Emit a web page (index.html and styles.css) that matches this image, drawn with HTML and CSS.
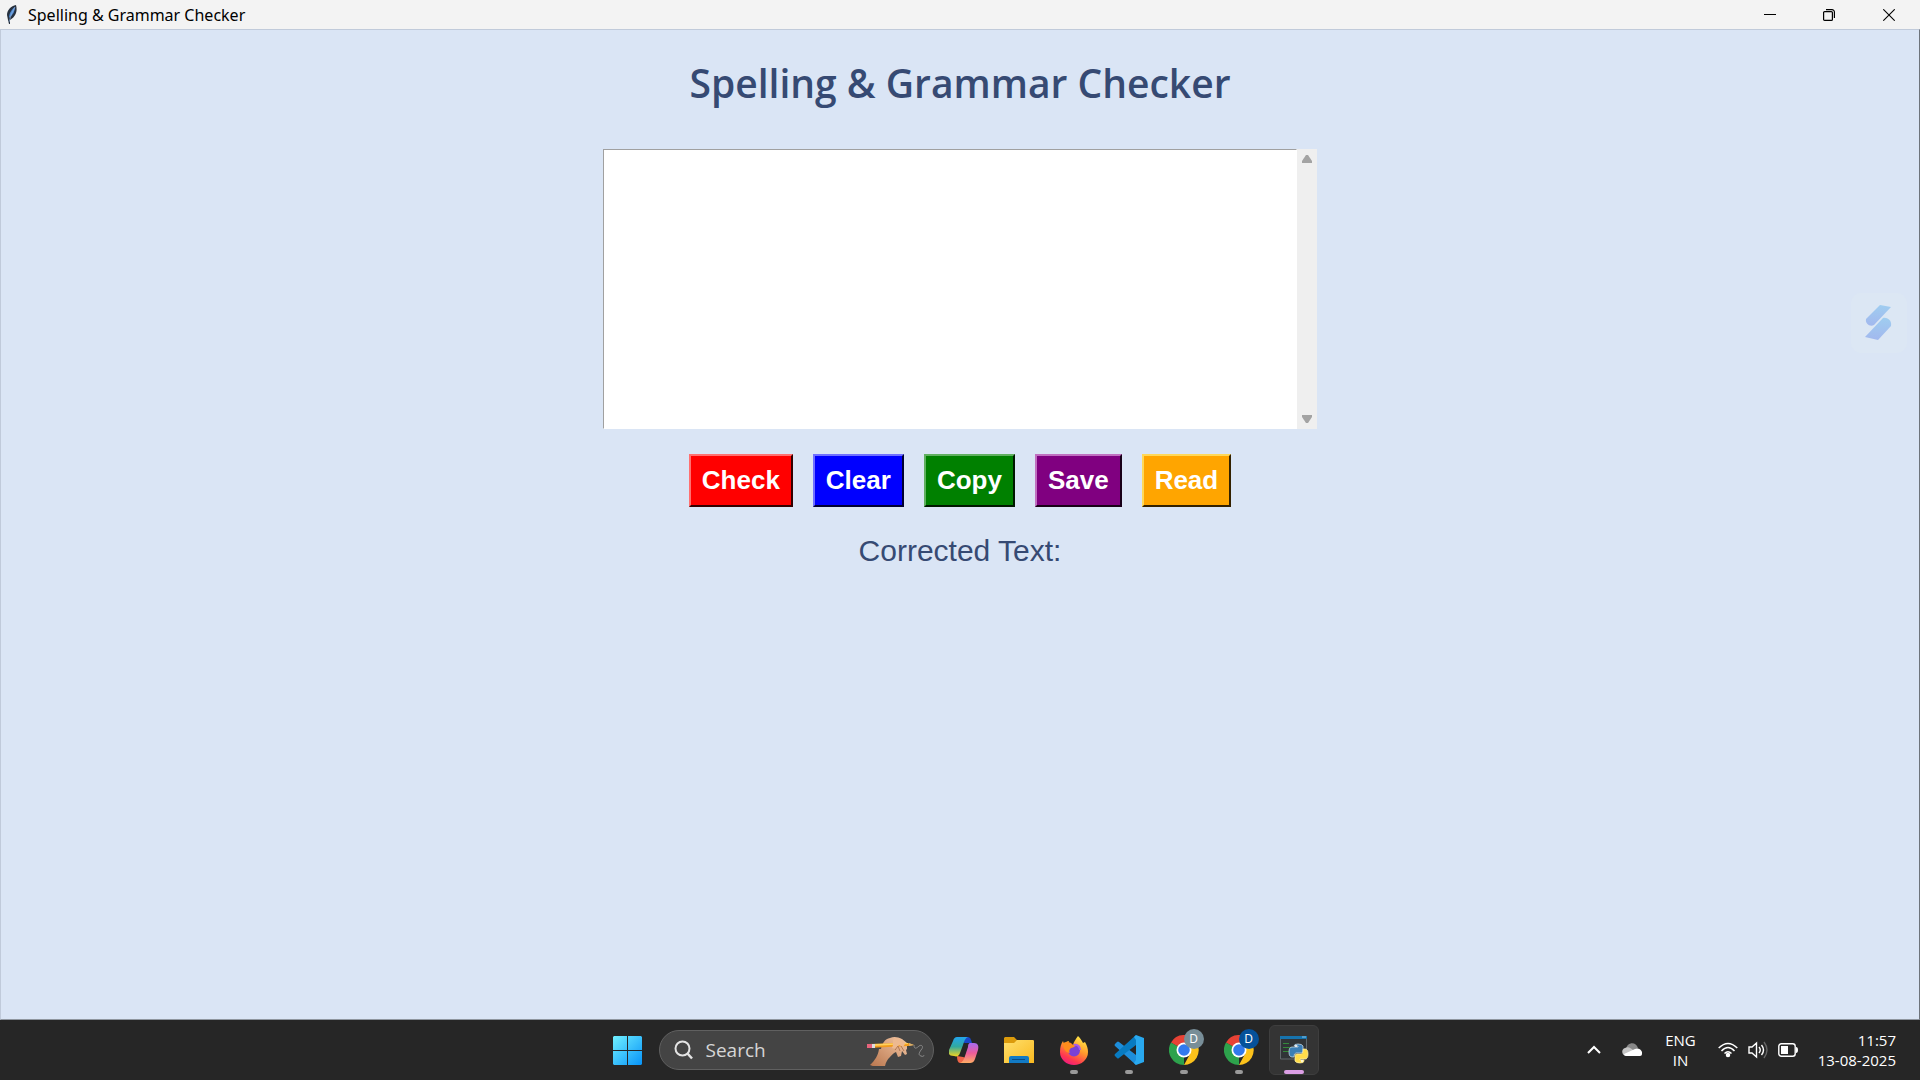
FILE: index.html
```html
<!DOCTYPE html>
<html lang="en">
<head>
<meta charset="utf-8">
<title>Spelling &amp; Grammar Checker</title>
<link rel="stylesheet" href="styles.css">
</head>
<body>
<header class="titlebar">
  <svg class="feather" width="12" height="20" viewBox="0 0 12 20"><path d="M10 0C5 1 1 5 1 10l1 5 1 4 1 0 0-4C9 12 12 7 10 0z" fill="#27313f"/><path d="M9 2C6 4 3 8 3 13 7 10 9 6 9 2z" fill="#4f8ad2"/><path d="M9 2Q5 8 3 17" stroke="#9fbfe6" stroke-width=".6" fill="none"/></svg>
  <span class="titlebar-text">Spelling &amp; Grammar Checker</span>
  <div class="window-controls">
    <button class="window-button" aria-label="Minimize"><svg width="12" height="12" viewBox="0 0 12 12"><path d="M0 5.5h12" stroke="#000"/></svg></button>
    <button class="window-button" aria-label="Restore"><svg width="12" height="12" viewBox="0 0 12 12" fill="none" stroke="#000" stroke-width="1.2"><rect x=".6" y="2.6" width="8.8" height="8.8" rx="1"/><path d="M3 .6h6a2.4 2.4 0 0 1 2.4 2.4v6"/></svg></button>
    <button class="window-button" aria-label="Close"><svg width="12" height="12" viewBox="0 0 12 12"><path d="M.3.3l11.4 11.4M11.7.3L.3 11.7" stroke="#000" stroke-width="1.1"/></svg></button>
  </div>
</header>

<main class="app">
  <h1 class="heading">Spelling &amp; Grammar Checker</h1>
  <div class="editor">
    <textarea class="editor-input" aria-label="Text to check"></textarea>
    <div class="scrollbar">
      <button class="scroll-button" aria-label="Scroll up"><svg width="12" height="8" viewBox="0 0 12 8"><path d="M5 0h2l4 6v2H1V6z" fill="#a3a3a3"/></svg></button>
      <button class="scroll-button" aria-label="Scroll down"><svg width="12" height="8" viewBox="0 0 12 8"><path d="M5 8h2l4-6V0H1v2z" fill="#a3a3a3"/></svg></button>
    </div>
  </div>
  <div class="actions">
    <button class="action check">Check</button>
    <button class="action clear">Clear</button>
    <button class="action copy">Copy</button>
    <button class="action save">Save</button>
    <button class="action read">Read</button>
  </div>
  <p class="result">Corrected Text:</p>
  <button class="assistant" aria-label="Assistant">
    <svg width="28" height="36" viewBox="0 0 28 36"><defs><linearGradient id="bolt" x1="0" y1="0" x2="0" y2="1"><stop offset="0" stop-color="#9fcdf0"/><stop offset="1" stop-color="#a2b8ee"/></linearGradient></defs><path d="M15 0l11 2L9 20C5 22 0 19 1 14z" fill="url(#bolt)"/><path d="M18 13c5-1 9 3 8 8L13 35 0 32z" fill="url(#bolt)"/></svg>
  </button>
</main>

<footer class="taskbar">
  <div class="taskbar-apps">
    <button class="task start" aria-label="Start"><svg width="30" height="30" viewBox="0 0 30 30"><defs><linearGradient id="win" x1="0" y1="0" x2="1" y2="1"><stop offset="0" stop-color="#70f0ff"/><stop offset="1" stop-color="#0793f8"/></linearGradient></defs><path d="M2 1h13v14H1V2zM16 1h13l1 1v13H16zM1 16h14v14H2l-1-1zM16 16h14v13l-1 1H16z" fill="url(#win)"/></svg></button>
    <label class="search">
      <svg width="20" height="20" viewBox="0 0 20 20" fill="none" stroke="#e4e4e4" stroke-width="2"><circle cx="8.500" cy="8.500" r="7"/><path d="M13.500 13.500l4.500 5" stroke-width="2.500"/></svg>
      <input class="search-input" type="text" placeholder="Search">
      <svg width="60" height="32" viewBox="0 0 60 32"><defs><linearGradient id="skin" x1="1" y1="0" x2="0" y2="1"><stop offset="0" stop-color="#f3c7a4"/><stop offset="1" stop-color="#b8754d"/></linearGradient></defs><path d="M14 15C15 9 18 5 23 4c4-2 8-1 12 1l5 4 0 6-1 1 1 4-2 1-3-4-1 5-3 1-2-5c-3 1-4 3-6 5-3 3-4 5-5 9-5 2-10 1-15-1 5-5 8-9 9-16z" fill="url(#skin)"/><path d="M1 10l40-1 6 2-6 1L1 14z" fill="#f29b1c"/><path d="M6 10l35-1v1L6 12z" fill="#ffd15b"/><path d="M0 10h5v4H0z" fill="#e7647c"/><path d="M5 10h3v4H5z" fill="#ddd"/><path d="M42 9l5 2-5 1z" fill="#d8b070"/><path d="M26 6c3-3 7-2 9 0l3 4-2 3-4-2-3 4-4-1 1-3z" fill="#edb990"/><path d="M28 16l3-4 2 5M34 12l3 5" stroke="#a56a45" stroke-width=".8" fill="none"/><path d="M47 11c0 5 3 3 5 1 3-2 5 1 2 4-2 3-3 5 0 6 2 1 3 0 3-1" stroke="#888" fill="none"/></svg>
    </label>
    <button class="task" aria-label="Copilot"><svg width="30" height="28" viewBox="0 0 30 28"><defs><linearGradient id="cp1" x1="0" y1="0" x2="0" y2="1"><stop offset="0" stop-color="#23a5ed"/><stop offset=".5" stop-color="#31a9a0"/><stop offset="1" stop-color="#f3d51f"/></linearGradient><linearGradient id="cp2" x1="0" y1="0" x2="0" y2="1"><stop offset="0" stop-color="#a76bf0"/><stop offset=".5" stop-color="#ec5b9b"/><stop offset="1" stop-color="#ffac64"/></linearGradient></defs><path d="M15 1h4c2 0 3 2 4 6h-7l-3-1z" fill="#1948c8"/><path d="M8 20l6 1 3 1-3 5h-3c-2 0-3-3-3-7z" fill="#ef6548"/><path d="M8 1h11c-3 1-4 5-5 8l-3 8c-1 3-3 4-6 3-5 0-6-2-5-6L4 5c1-3 2-4 4-4z" fill="url(#cp1)"/><path d="M21 7h4c4 0 5 3 4 7l-3 9c-1 3-3 4-5 4H11c3-1 4-4 5-7l3-9c0-3 1-4 2-4z" fill="url(#cp2)"/></svg></button>
    <button class="task" aria-label="File Explorer"><svg width="30" height="28" viewBox="0 0 30 28"><defs><linearGradient id="fold" x1="0" y1="0" x2="1" y2="1"><stop offset="0" stop-color="#ffe06c"/><stop offset="1" stop-color="#f9b920"/></linearGradient></defs><path d="M1 1h9l3 3h16l1 1v9H0V2z" fill="#dc9b0b"/><path d="M0 7h10l3-3h16l1 1v22H0z" fill="url(#fold)"/><path d="M5 27v-5q0-2 2-2h16q2 0 2 2v5z" fill="#127ac4"/><path d="M8 23.500h13" stroke="#0a4b84"/></svg></button>
    <button class="task running" aria-label="Firefox"><svg width="30" height="30" viewBox="0 0 30 30"><defs><linearGradient id="fox" x1=".8" y1="0" x2=".3" y2="1"><stop offset="0" stop-color="#fff04a"/><stop offset=".45" stop-color="#ff9a2c"/><stop offset=".8" stop-color="#ff3850"/><stop offset="1" stop-color="#ee1a82"/></linearGradient></defs><path d="M19 1c3 3 4 5 5 7l2-1c2 3 3 7 3 10a14 13 0 0 1-28 0C1 12 2 9 4 6l1 3c2-2 3-3 5-3l-1 3 5 1c1-4 3-6 5-9z" fill="url(#fox)"/><circle cx="15" cy="15.500" r="6" fill="#7941d6"/><path d="M4 8c4-2 8-1 10 2l3 0c-1 3-5 2-6 4s-1 3 0 4c-4 0-7-4-7-10z" fill="#ff8c1c"/><path d="M15 10c4-1 6 2 6 5" stroke="#a85bea" stroke-width="2" fill="none"/></svg></button>
    <button class="task running" aria-label="Visual Studio Code"><svg width="30" height="30" viewBox="0 0 30 30"><path d="M22 30L1 11q-1-1 0-2l2-2q1-1 2 0l17 13z" fill="#1d8edb"/><path d="M22 0L1 19q-1 1 0 2l2 2q1 1 2 0l17-13z" fill="#087bc1"/><path d="M22 0l8 3v24l-8 3-2-2 2-3V5l-2-3z" fill="#29a9ef"/></svg></button>
    <button class="task running" aria-label="Chrome profile one">
      <svg width="30" height="30" viewBox="0 0 30 30"><path d="M15 15L2 7.500A15 15 0 0 1 28 7.500z" fill="#e74235"/><path d="M15 15V30A15 15 0 0 1 2 7.500z" fill="#2da24c"/><path d="M15 8h13a15 15 0 0 1-13 22l6-11z" fill="#fcc21b"/><circle cx="15" cy="15" r="7.500" fill="#fff"/><circle cx="15" cy="15" r="5.800" fill="#3279ed"/></svg>
      <span class="badge badge-gray">D</span></button>
    <button class="task running" aria-label="Chrome profile two">
      <svg width="30" height="30" viewBox="0 0 30 30"><path d="M15 15L2 7.500A15 15 0 0 1 28 7.500z" fill="#e74235"/><path d="M15 15V30A15 15 0 0 1 2 7.500z" fill="#2da24c"/><path d="M15 8h13a15 15 0 0 1-13 22l6-11z" fill="#fcc21b"/><circle cx="15" cy="15" r="7.500" fill="#fff"/><circle cx="15" cy="15" r="5.800" fill="#3279ed"/></svg>
      <span class="badge badge-blue">D</span></button>
    <button class="task running active" aria-label="Python"><svg width="30" height="30" viewBox="0 0 30 30"><path d="M1.500 2v22h26V2z" fill="#303437" stroke="#62696e"/><path d="M1 1h27v3H1z" fill="#1673ad"/><path d="M23 2h4" stroke="#8bc5e8"/><path d="M4 8.500h6M4 12.500h15M4 16.500h6" stroke="#348a3b"/><path d="M15 11q0-2 4-2t5 2v5q0 2-2 2h-5q-2 0-2 4h-2q-3 0-3-5t3-5h6v-1h-4z" fill="#3b7eb5" stroke="#d5e5ed" stroke-width=".7"/><path d="M24 14h2q3 0 3 5t-3 5h-5v1h4v1q0 2-4 2t-5-2v-5q0-2 2-2h4q2 0 2-3z" fill="#ffdc4a" stroke="#fff2ad" stroke-width=".7"/><circle cx="17" cy="11" r="1" fill="#fff"/><circle cx="23" cy="26" r="1" fill="#fff"/></svg></button>
  </div>
  <div class="tray">
    <button class="tray-button chevron" aria-label="Show hidden icons"><svg width="16" height="10" viewBox="0 0 16 10"><path d="M2 8l6-6 6 6" stroke="#fff" stroke-width="2" fill="none"/></svg></button>
    <button class="tray-button cloud" aria-label="OneDrive"><svg width="20" height="14" viewBox="0 0 20 14"><path d="M4 6c1-7 10-8 12-1l-7 6z" fill="#888"/><path d="M3 5c3-2 6 0 8 2l6 4-12 2C-1 13-1 6 3 5z" fill="#c5c5c5"/><path d="M2 11l11-5c4-2 8 2 7 5 0 2-2 2-3 2H4q-2 0-2-2z" fill="#fff"/></svg></button>
    <button class="tray-button language">ENG<br>IN</button>
    <button class="tray-button status" aria-label="Network, sound and battery">
      <svg width="20" height="16" viewBox="0 0 20 16" fill="none" stroke="#fff" stroke-width="1.500"><path d="M.7 6Q10-3 19.300 6M3.500 9Q10 2 16.500 9M6.500 11.500Q10 8 13.500 11.500"/><circle cx="10" cy="13" r="1.500" fill="#fff"/></svg>
      <svg width="20" height="18" viewBox="0 0 20 18" fill="none" stroke="#fff" stroke-width="1.400"><path d="M1 6h3l4.500-4v14L4 12H1zM11 6q2.500 3 0 6M13.500 4q4 5 0 10"/><path d="M16 1q6 8 0 16" stroke="#666"/></svg>
      <svg width="20" height="14" viewBox="0 0 20 14"><rect x=".8" y=".8" width="16.400" height="12.400" rx="2.500" fill="none" stroke="#fff" stroke-width="1.400"/><path d="M3 3h7v8H3zM18 4q2 0 2 3t-2 3z" fill="#fff"/></svg>
    </button>
    <button class="tray-button clock">11:57<br>13-08-2025</button>
  </div>
</footer>
</body>
</html>
```
FILE: styles.css
```css
* { box-sizing: border-box; }

body {
  margin: 0;
  min-height: 100vh;
  display: flex;
  flex-direction: column;
  background: #dae5f5;
  font-family: "Open Sans", "Noto Sans", sans-serif;
}

button {
  margin: 0;
  border: 0;
  background: none;
  font: inherit;
}

svg { display: block; flex: none; }

.titlebar {
  display: flex;
  align-items: center;
  height: 29px;
  padding-left: 6px;
  gap: 10px;
  background: #f3f3f3;
}

.titlebar-text {
  flex: 1;
  font-family: "Noto Sans", "Open Sans", sans-serif;
  font-size: 16px;
  line-height: 28px;
  color: #000;
}

.window-controls { display: flex; align-self: stretch; }

.window-button {
  display: flex;
  align-items: center;
  justify-content: center;
  width: 59px;
  padding: 0;
}

.window-button:last-child { width: 62px; }

.app {
  position: relative;
  flex: 1;
  display: flex;
  flex-direction: column;
  align-items: center;
  border: 1px solid #c0cada;
  border-right-color: #6e747c;
  border-bottom-color: #8f969f;
}

.heading {
  margin: 26px 0 40px;
  font-family: "Trebuchet MS", "Open Sans", sans-serif;
  font-size: 39px;
  line-height: 53px;
  font-weight: 600;
  color: #364a73;
}

.editor {
  display: flex;
  width: 714px;
  max-width: 100%;
  height: 280px;
}

.editor-input {
  flex: 1;
  min-width: 0;
  margin: 0;
  padding: 4px;
  border: 1px solid #fff;
  border-top-color: #a0a0a0;
  border-left-color: #a0a0a0;
  border-radius: 0;
  outline: 0;
  resize: none;
  overflow: hidden;
  background: #fff;
  font: 24px/28px "Liberation Sans", Arial, sans-serif;
}

.scrollbar {
  display: flex;
  flex-direction: column;
  justify-content: space-between;
  width: 20px;
  background: #efefef;
}

.scroll-button {
  display: flex;
  align-items: center;
  justify-content: center;
  height: 20px;
  padding: 0;
}

.actions { display: flex; gap: 20px; margin-top: 25px; }

.action {
  padding: 9px 11px 10px;
  border: 2px solid;
  color: #fff;
  font: 700 26px/30px "Liberation Sans", Arial, sans-serif;
}

.check { background: #f00; border-color: #ff7070 #300 #300 #ff7070; }
.clear { background: #00f; border-color: #7070ff #003 #003 #7070ff; }
.copy { background: #008000; border-color: #60b060 #001800 #001800 #60b060; }
.save { background: #800080; border-color: #c070c0 #180018 #180018 #c070c0; }
.read { background: #ffa500; border-color: #ffd858 #332100 #332100 #ffd858; }

.result {
  margin: 27px 0;
  font: 30px/34px "Liberation Sans", Arial, sans-serif;
  color: #364a73;
}

.assistant {
  position: absolute;
  top: 263px;
  right: 12px;
  display: flex;
  align-items: center;
  justify-content: center;
  width: 56px;
  height: 60px;
  padding: 0;
  border-radius: 10px;
  background: #dce7f4;
}

.taskbar {
  display: grid;
  grid-template-columns: 1fr auto 1fr;
  align-items: center;
  height: 60px;
  background: #262626;
  color: #fff;
}

.taskbar-apps {
  grid-column: 2;
  display: flex;
  align-items: center;
  gap: 5px;
}

.task {
  position: relative;
  display: flex;
  align-items: center;
  justify-content: center;
  width: 50px;
  height: 50px;
  padding: 0;
  border-radius: 6px;
}

.start { margin-right: 2px; }

.running::after {
  content: "";
  position: absolute;
  bottom: 1px;
  width: 8px;
  height: 4px;
  border-radius: 2px;
  background: #9a9a9a;
}

.active { background: #343434; border: 1px solid #3e3e3e; }
.active::after { bottom: 0; width: 20px; background: #dc9fe5; }

.badge {
  position: absolute;
  top: 4px;
  right: 5px;
  width: 20px;
  height: 20px;
  border-radius: 50%;
  color: #fff;
  font-size: 12px;
  line-height: 20px;
}

.badge-gray { background: #788e98; }
.badge-blue { background: #05519a; }

.search {
  display: flex;
  align-items: center;
  gap: 12px;
  width: 275px;
  height: 40px;
  padding: 0 6px 0 14px;
  border: 1px solid #606060;
  border-radius: 20px;
  background: #444;
}

.search-input {
  flex: 1;
  min-width: 0;
  padding: 0;
  border: 0;
  outline: 0;
  background: none;
  color: #fff;
  font-family: inherit;
  font-size: 19px;
  line-height: 28px;
}

.search-input::placeholder { color: #d6d6d6; opacity: 1; }

.tray {
  display: flex;
  align-items: center;
  justify-content: flex-end;
  padding-right: 24px;
}

.tray-button {
  padding: 0;
  color: #fff;
  font-size: 15px;
  line-height: 20px;
}

.cloud { margin-left: 20px; }
.language { margin-left: 23px; }
.status { display: flex; align-items: center; gap: 10px; margin-left: 22px; }
.clock { margin-left: 20px; text-align: right; }
```
